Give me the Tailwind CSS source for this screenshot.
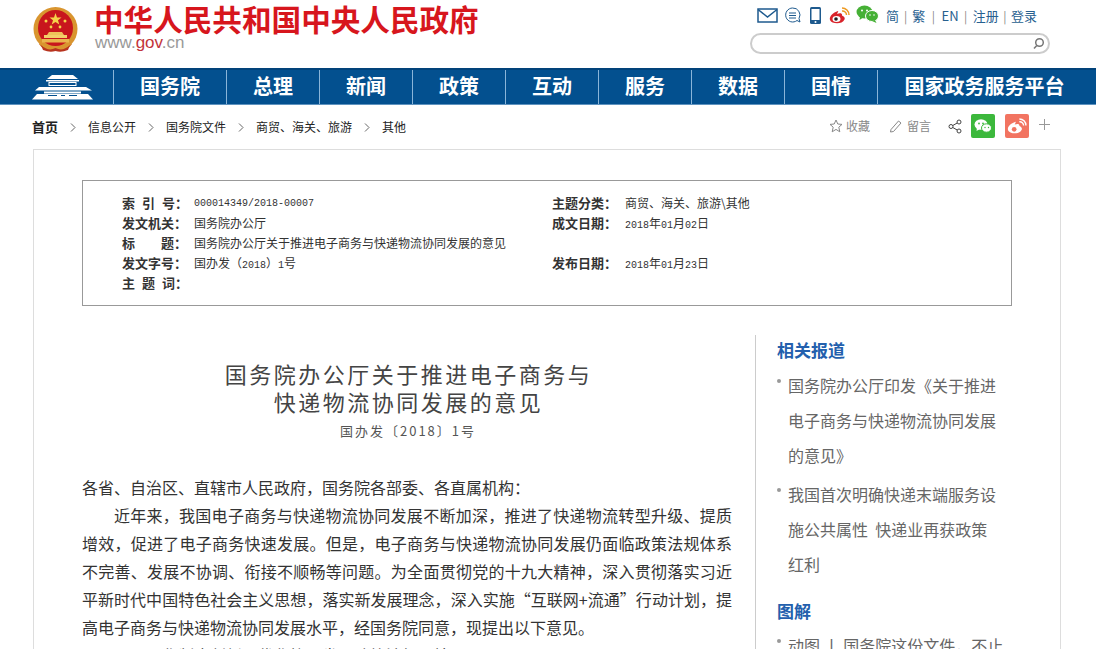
<!DOCTYPE html>
<html lang="zh-CN">
<head>
  <meta charset="UTF-8">
  <title>国务院办公厅关于推进电子商务与快递物流协同发展的意见</title>
  <script src="https://cdn.jsdelivr.net/npm/@tailwindcss/browser@4"></script>
</head>
<body class="w-[1096px] h-[649px] overflow-hidden bg-white font-['Noto_Sans_CJK_SC','Liberation_Sans',sans-serif] text-[#333]">

<!-- header -->
<header class="h-[68px] flex justify-between">
  <div class="flex pl-[33px] pt-[6px]">
    <svg width="45" height="48" viewBox="0 0 45 48">
      <path d="M6 38 Q12 47 22 44 Q33 47 39 38 L34 34 H11 Z" fill="#c9651f"/>
      <ellipse cx="22.500" cy="23" rx="22" ry="22" fill="#d9952f"/>
      <ellipse cx="22.500" cy="22" rx="17.500" ry="18" fill="#c8161d"/>
      <polygon points="22.500,7 24,11.500 28.500,11.500 25,14.200 26.300,18.500 22.500,16 18.700,18.500 20,14.200 16.500,11.500 21,11.500" fill="#f6d34a"/>
      <circle cx="13" cy="15" r="1.500" fill="#f6d34a"/><circle cx="32" cy="15" r="1.500" fill="#f6d34a"/>
      <circle cx="18" cy="21" r="1.400" fill="#f6d34a"/><circle cx="27" cy="21" r="1.400" fill="#f6d34a"/>
      <path d="M16 26 H29 L31 29 H14 Z" fill="#eec25a"/>
      <rect x="11" y="29" width="23" height="3" fill="#f3cf6a"/>
      <rect x="9" y="33" width="27" height="3.500" fill="#e9b54d"/>
      <path d="M8 39 Q15 46 22.500 42 Q30 46 37 39 L35 44 Q28 47 22.500 45 Q17 47 10 44 Z" fill="#b8341f"/>
    </svg>
    <div class="ml-[16px] -mt-[2px]">
      <div class="text-[29.600px] leading-[30px] font-bold text-[#d7161d] whitespace-nowrap">中华人民共和国中央人民政府</div>
      <div class="font-['Liberation_Sans',sans-serif] text-[17px] leading-[18px] ml-[1px] text-[#999]">www.<span class="text-[#c2343a]">gov</span>.cn</div>
    </div>
  </div>
  <div class="w-[300px] mr-[46px] pt-[5px]">
    <div class="h-[21px] flex items-center text-[13px] text-[#27608f] whitespace-nowrap">
      <svg class="ml-[7px]" width="21" height="15" viewBox="0 0 21 15" fill="none" stroke="#1e5a8e" stroke-width="1.500"><rect x="1" y="1" width="19" height="13"/><path d="M1 1.500 L10.500 9 L20 1.500"/></svg>
      <svg class="ml-[6px]" width="17" height="17" viewBox="0 0 17 17" fill="none" stroke="#1e5a8e"><path d="M8.500 1 A7 7 0 1 0 13 13.500 L16 15 L15 11.500 A7 7 0 0 0 8.500 1 Z"/><path d="M5 6 H12 M5 8.500 H12 M5 11 H12"/></svg>
      <svg class="ml-[9px]" width="11" height="17" viewBox="0 0 11 17"><rect x="0" y="0" width="11" height="17" rx="1.500" fill="#1e5a8e"/><rect x="1.500" y="2" width="8" height="11" fill="#fff"/><circle cx="5.500" cy="15" r="1" fill="#fff"/></svg>
      <svg class="ml-[8px]" width="21" height="17" viewBox="0 0 21 17" fill="none"><path d="M9 4 C3 6 0 10 1 13 C2.500 17 13 18 15.500 12.500 C16.500 10 14 9 13 8.500 C13.500 6.500 11.500 5.500 8 7 C9 5 9.500 4 9 4 Z" fill="#d9232a"/><ellipse cx="7.500" cy="12" rx="4" ry="3" fill="#fff"/><circle cx="7" cy="12" r="1.800" fill="#222"/><path d="M13 4 A4 4 0 0 1 17.500 8 M13 1 A7 7 0 0 1 20 8" stroke="#ee9a22" stroke-width="1.500"/></svg>
      <svg class="ml-[6px] -mt-[4px]" width="23" height="18" viewBox="0 0 23 18"><ellipse cx="8.500" cy="7" rx="8" ry="6.500" fill="#45b035"/><path d="M4 11 L3.500 15 L8 12 Z" fill="#45b035"/><ellipse cx="16" cy="11" rx="6.500" ry="5.500" fill="#45b035" stroke="#fff"/><path d="M19 15 L20.500 18 L16 16 Z" fill="#45b035"/><circle cx="6" cy="5.500" r="1" fill="#fff"/><circle cx="11" cy="5.500" r="1" fill="#fff"/><circle cx="14" cy="10" r=".8" fill="#fff"/><circle cx="18" cy="10" r=".8" fill="#fff"/></svg>
      <span class="ml-[7px]">简</span><span class="mx-[5px] text-[#888] text-[12px]">|</span>
      <span>繁</span><span class="mx-[6.500px] text-[#888] text-[12px]">|</span>
      <span>EN</span><span class="mx-[5.500px] text-[#888] text-[12px]">|</span>
      <span>注册</span><span class="mx-[4.500px] text-[#888] text-[12px]">|</span>
      <span>登录</span>
    </div>
    <div class="mt-[7px] h-[21px] rounded-full border-2 border-[#ccc] flex items-center justify-end pr-[3px]">
      <svg width="13" height="13" viewBox="0 0 13 13" fill="none" stroke="#777" stroke-width="1.500"><circle cx="7.500" cy="5.500" r="3.800"/><path d="M4.800 8.500 L2 11.500"/></svg>
    </div>
  </div>
</header>

<!-- nav -->
<nav class="h-[37px] flex bg-[#03508f] border-t-2 border-t-[#02437a] border-b border-b-[#5f93bf] text-white text-[20px] leading-[32px] font-bold text-center">
  <div class="w-[113px] flex items-center justify-end pr-[20px]">
    <svg width="61" height="26" viewBox="0 0 61 26" fill="#fff">
      <path d="M20 1 H41 L46 5 H15 Z"/><rect x="14" y="6" width="33" height="1.500"/>
      <rect x="17" y="8.500" width="27" height="3" fill="none" stroke="#fff"/>
      <path d="M7 12 H54 L60 15.500 H3 Z" transform="translate(0 1)"/>
      <rect x="12" y="17.500" width="37" height="2" fill="#fff"/>
      <path d="M5 20 H56 L61 25.500 H0 Z"/>
      <path d="M16 21.500 H25 M29 21.500 H33 M37 21.500 H45" stroke="#03508f"/>
    </svg>
  </div>
  <a class="w-[113px] border-l border-[#8ab5d9]">国务院</a>
  <a class="w-[93px] border-l border-[#8ab5d9]">总理</a>
  <a class="w-[93px] border-l border-[#8ab5d9]">新闻</a>
  <a class="w-[93px] border-l border-[#8ab5d9]">政策</a>
  <a class="w-[93px] border-l border-[#8ab5d9]">互动</a>
  <a class="w-[93px] border-l border-[#8ab5d9]">服务</a>
  <a class="w-[93px] border-l border-[#8ab5d9]">数据</a>
  <a class="w-[93px] border-l border-[#8ab5d9]">国情</a>
  <a class="w-[214px] border-l border-[#8ab5d9]">国家政务服务平台</a>
</nav>

<!-- breadcrumb + share -->
<div class="h-[44px] flex items-center justify-between pl-[32px] pr-[46px] text-[12px]">
  <div class="flex items-center whitespace-nowrap text-[#222]">
    <b class="text-[13px]">首页</b>
    <svg class="mx-[12px]" width="6" height="9" viewBox="0 0 6 9" fill="none" stroke="#666"><path d="M1 .500 L5 4.500 L1 8.500"/></svg>
    <span>信息公开</span>
    <svg class="mx-[12px]" width="6" height="9" viewBox="0 0 6 9" fill="none" stroke="#666"><path d="M1 .500 L5 4.500 L1 8.500"/></svg>
    <span>国务院文件</span>
    <svg class="mx-[12px]" width="6" height="9" viewBox="0 0 6 9" fill="none" stroke="#666"><path d="M1 .500 L5 4.500 L1 8.500"/></svg>
    <span>商贸、海关、旅游</span>
    <svg class="mx-[12px]" width="6" height="9" viewBox="0 0 6 9" fill="none" stroke="#666"><path d="M1 .500 L5 4.500 L1 8.500"/></svg>
    <span>其他</span>
  </div>
  <div class="flex items-center text-[#888] whitespace-nowrap -mt-[2px]">
    <svg width="14" height="14" viewBox="0 0 14 14" fill="none" stroke="#888"><polygon points="7,1 8.800,5 13,5.400 9.800,8.200 10.800,12.800 7,10.400 3.200,12.800 4.200,8.200 1,5.400 5.200,5"/></svg>
    <span class="ml-[3px]">收藏</span>
    <svg class="ml-[19px]" width="13" height="13" viewBox="0 0 13 13" fill="none" stroke="#888"><path d="M9.500 1 L12 3 L4.500 11.500 L1.500 12 L2 9.500 Z"/></svg>
    <span class="ml-[5px]">留言</span>
    <svg class="ml-[17px]" width="14" height="15" viewBox="0 0 14 15" fill="none" stroke="#444"><circle cx="11" cy="3" r="2"/><circle cx="3" cy="7.500" r="2"/><circle cx="11" cy="12" r="2"/><path d="M9.200 4 L4.800 6.500 M4.800 8.500 L9.200 11"/></svg>
    <div class="ml-[9px] w-[24px] h-[24px] rounded-[2px] bg-[#3cb83c] flex items-center justify-center">
      <svg width="18" height="15" viewBox="0 0 18 15" fill="#fff"><ellipse cx="7" cy="5.500" rx="6.500" ry="5.200"/><path d="M3 9 L2.500 12 L6 10 Z"/><ellipse cx="12.500" cy="9" rx="5" ry="4.200" stroke="#3cb83c"/><circle cx="5" cy="4.500" r=".9" fill="#3cb83c"/><circle cx="9" cy="4.500" r=".9" fill="#3cb83c"/><circle cx="11" cy="8.500" r=".7" fill="#3cb83c"/><circle cx="14.500" cy="8.500" r=".7" fill="#3cb83c"/></svg>
    </div>
    <div class="ml-[10px] w-[24px] h-[24px] rounded-[2px] bg-[#f27461] flex items-center justify-center">
      <svg width="20" height="16" viewBox="0 0 21 17" fill="none"><path d="M9 4 C3 6 0 10 1 13 C2.500 17 13 18 15.500 12.500 C16.500 10 14 9 13 8.500 C13.500 6.500 11.500 5.500 8 7 C9 5 9.500 4 9 4 Z" fill="#fff"/><circle cx="7.500" cy="12" r="2.500" fill="#f27461"/><path d="M13 4 A4 4 0 0 1 17.500 8 M13 1 A7 7 0 0 1 20 8" stroke="#fff" stroke-width="1.500"/></svg>
    </div>
    <svg class="ml-[10px] -mt-[4px]" width="11" height="11" viewBox="0 0 11 11" stroke="#999"><path d="M5.500 0 V11 M0 5.500 H11"/></svg>
  </div>
</div>

<!-- content -->
<main class="ml-[33px] w-[1028px] h-[600px] border border-b-0 border-[#ddd] px-[48px] pt-[30px]">
  <div class="w-[930px] h-[126px] border border-[#999] pt-[12px] pl-[39px] text-[12px] grid grid-cols-[430px_1fr]">
    <div>
      <div class="flex h-[20px] items-center"><b class="w-[72px] text-[13px] whitespace-nowrap"><span class="tracking-[7px]">索引</span>号：</b><span class="font-['Liberation_Mono',monospace] text-[10px]">000014349/2018-00007</span></div>
      <div class="flex h-[20px] items-center"><b class="w-[72px] text-[13px] whitespace-nowrap">发文机关：</b><span>国务院办公厅</span></div>
      <div class="flex h-[20px] items-center"><b class="w-[72px] text-[13px] whitespace-nowrap"><span class="tracking-[26px]">标</span>题：</b><span class="whitespace-nowrap">国务院办公厅关于推进电子商务与快递物流协同发展的意见</span></div>
      <div class="flex h-[20px] items-center"><b class="w-[72px] text-[13px] whitespace-nowrap">发文字号：</b><span>国办发（<span class="font-['Liberation_Mono',monospace] text-[10px]">2018</span>）<span class="font-['Liberation_Mono',monospace] text-[10px]">1</span>号</span></div>
      <div class="flex h-[20px] items-center"><b class="w-[72px] text-[13px] whitespace-nowrap"><span class="tracking-[7px]">主题</span>词：</b></div>
    </div>
    <div>
      <div class="flex h-[20px] items-center"><b class="w-[73px] text-[13px] whitespace-nowrap">主题分类：</b><span>商贸、海关、旅游\其他</span></div>
      <div class="flex h-[20px] items-center"><b class="w-[73px] text-[13px] whitespace-nowrap">成文日期：</b><span><span class="font-['Liberation_Mono',monospace] text-[10px]">2018</span>年<span class="font-['Liberation_Mono',monospace] text-[10px]">01</span>月<span class="font-['Liberation_Mono',monospace] text-[10px]">02</span>日</span></div>
      <div class="h-[20px]"></div>
      <div class="flex h-[20px] items-center"><b class="w-[73px] text-[13px] whitespace-nowrap">发布日期：</b><span><span class="font-['Liberation_Mono',monospace] text-[10px]">2018</span>年<span class="font-['Liberation_Mono',monospace] text-[10px]">01</span>月<span class="font-['Liberation_Mono',monospace] text-[10px]">23</span>日</span></div>
    </div>
  </div>

  <div class="flex mt-[29px]">
    <article class="w-[650px] pt-[24px] shrink-0">
      <h1 class="pl-[3px] text-center text-[22px] leading-[28px] tracking-[2.500px] text-[#444]">国务院办公厅关于推进电子商务与<br>快递物流协同发展的意见</h1>
      <p class="pl-[2px] mt-[2px] text-center text-[13px] leading-[28px] tracking-[2px] text-[#555]">国办发〔2018〕1号</p>
      <div class="mt-[28px] text-[16px] leading-[28px] text-[#333] text-justify">
        <p>各省、自治区、直辖市人民政府，国务院各部委、各直属机构：</p>
        <p class="indent-[32px]">近年来，我国电子商务与快递物流协同发展不断加深，推进了快递物流转型升级、提质增效，促进了电子商务快速发展。但是，电子商务与快递物流协同发展仍面临政策法规体系不完善、发展不协调、衔接不顺畅等问题。为全面贯彻党的十九大精神，深入贯彻落实习近平新时代中国特色社会主义思想，落实新发展理念，深入实施“互联网+流通”行动计划，提高电子商务与快递物流协同发展水平，经国务院同意，现提出以下意见。</p>
        <p class="indent-[32px]">一、强化制度创新，优化协同发展政策法规环境</p>
      </div>
    </article>
    <aside class="ml-[23px] pl-[21px] w-[257px] shrink-0 border-l border-[#ccc] h-[400px] text-[16px] text-[#666]">
      <h2 class="text-[17px] leading-[32px] -mt-[1px] font-bold text-[#2360ad]">相关报道</h2>
      <ul class="pr-[14px]">
        <li class="relative pl-[11px] leading-[35px] mt-[2px] before:absolute before:left-[0px] before:top-[11px] before:w-[4px] before:h-[4px] before:rounded-full before:bg-[#999]">国务院办公厅印发《关于推进电子商务与快递物流协同发展的意见》</li>
        <li class="relative pl-[11px] leading-[35px] mt-[4px] before:absolute before:left-[0px] before:top-[11px] before:w-[4px] before:h-[4px] before:rounded-full before:bg-[#999]">我国首次明确快递末端服务设施公共属性&nbsp; 快递业再获政策红利</li>
      </ul>
      <h2 class="text-[17px] leading-[32px] font-bold text-[#2360ad] mt-[13px]">图解</h2>
      <ul>
        <li class="relative pl-[11px] leading-[35px] mt-[1px] before:absolute before:left-[0px] before:top-[11px] before:w-[4px] before:h-[4px] before:rounded-full before:bg-[#999]">动图 丨 国务院这份文件，不止</li>
      </ul>
    </aside>
  </div>
</main>

</body>
</html>
